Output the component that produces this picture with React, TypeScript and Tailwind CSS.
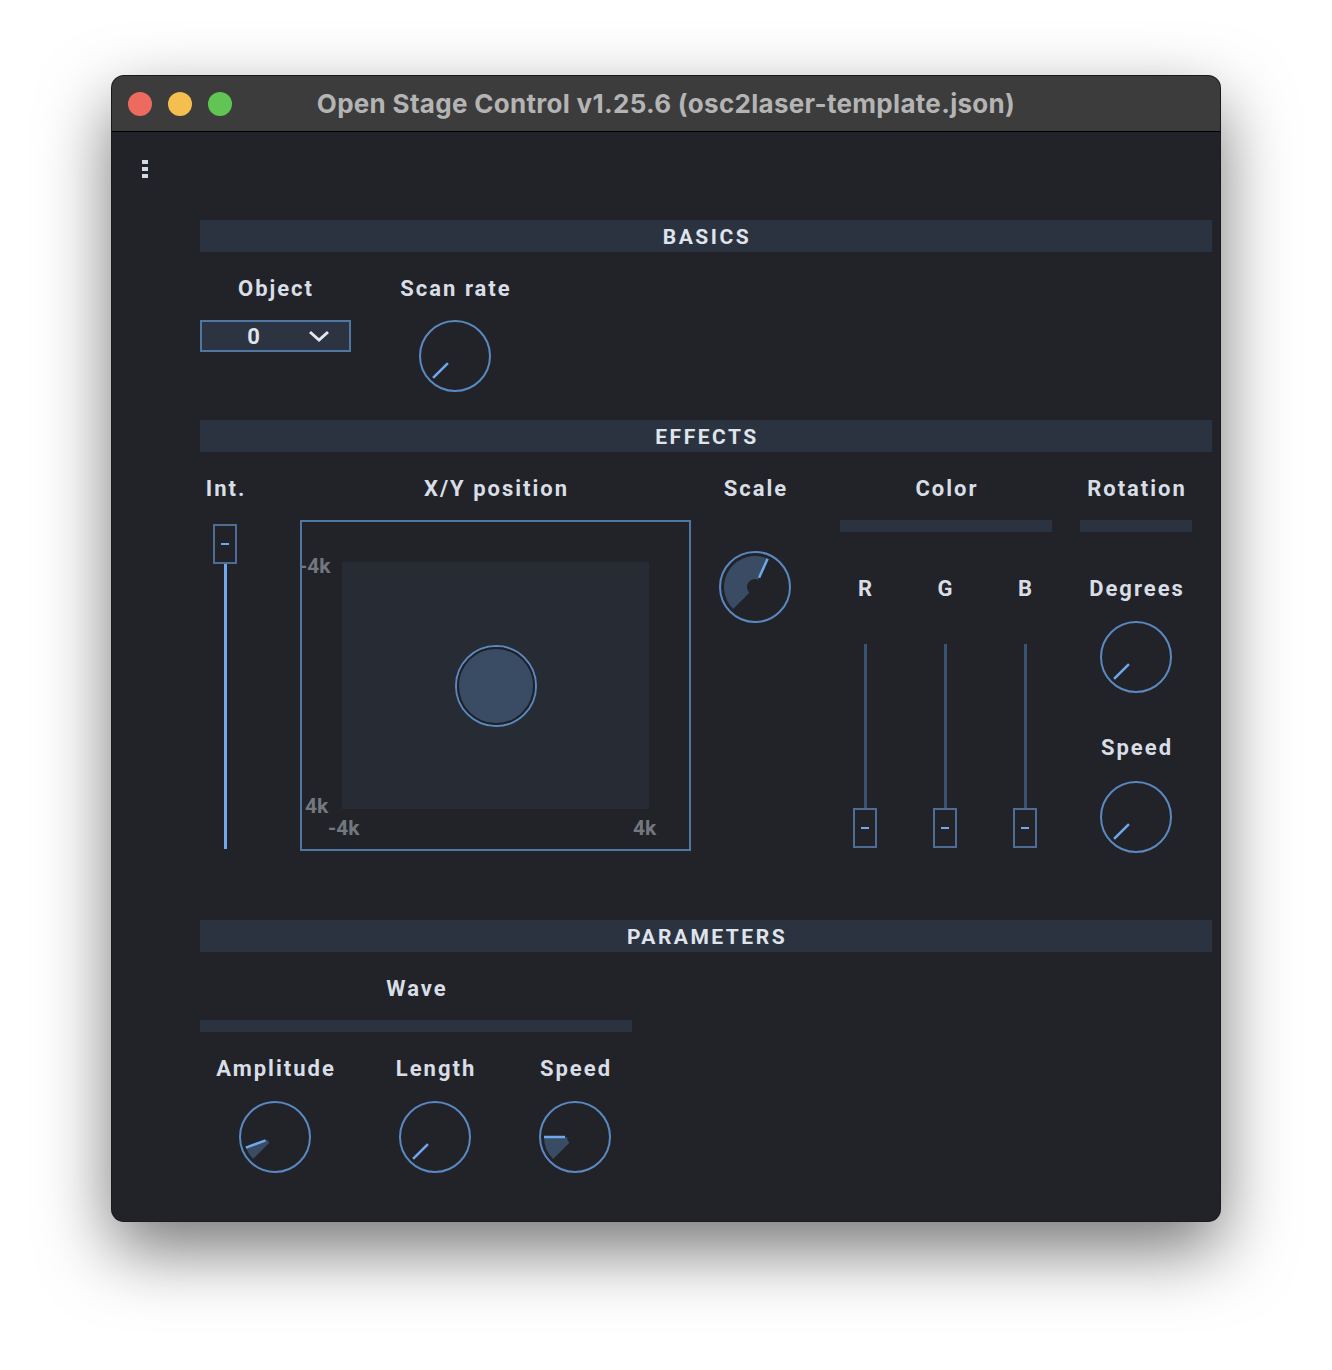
import React from 'react';

const LABEL = "font-['Roboto',sans-serif] font-bold text-[22px] tracking-[2px] text-[#d9dee6] leading-none";
const AXIS = "absolute font-['Roboto',sans-serif] font-bold text-[21px] leading-none text-[#73777e]";

function Knob({ angle, wedge = false }: { angle: number; wedge?: boolean }) {
  const c = 36;
  const pt = (a: number, r: number) => {
    const rad = (a * Math.PI) / 180;
    return `${(c + r * Math.sin(rad)).toFixed(2)} ${(c - r * Math.cos(rad)).toFixed(2)}`;
  };
  const start = -135;
  const large = angle - start > 180 ? 1 : 0;
  const r1 = 8;
  const r2 = 31;
  const d = `M ${pt(start, r1)} L ${pt(start, r2)} A ${r2} ${r2} 0 ${large} 1 ${pt(angle, r2)} L ${pt(angle, r1)} A ${r1} ${r1} 0 ${large} 0 ${pt(start, r1)} Z`;
  const rad = (angle * Math.PI) / 180;
  return (
    <svg width="72" height="72" viewBox="0 0 72 72" className="block">
      {wedge && <path d={d} fill="#3a4c63" />}
      <circle cx={c} cy={c} r="35" fill="none" stroke="#5a89c2" strokeWidth="2" />
      <line
        x1={c + 10 * Math.sin(rad)}
        y1={c - 10 * Math.cos(rad)}
        x2={c + 31 * Math.sin(rad)}
        y2={c - 31 * Math.cos(rad)}
        stroke="#6ea8ee"
        strokeWidth="2.5"
      />
    </svg>
  );
}

function Handle() {
  return (
    <div className="w-[24px] h-[40px] border-2 border-[#4d6d94] flex items-center justify-center">
      <div className="w-[8px] h-[2px] bg-[#6ea8ee]" />
    </div>
  );
}

function SectionHeader({ title }: { title: string }) {
  return (
    <div className="h-[32px] pt-[3px] pl-[2px] bg-[#2c3340] flex items-center justify-center font-['Roboto',sans-serif] font-bold text-[21px] tracking-[2.5px] text-[#dfe4ec]">
      {title}
    </div>
  );
}

function Label({ text, className = '' }: { text: string; className?: string }) {
  return <div className={`h-[68px] pt-[6px] pl-[2px] flex items-center justify-center whitespace-nowrap ${LABEL} ${className}`}>{text}</div>;
}

function RgbFader({ name }: { name: string }) {
  return (
    <div className="w-[50px] flex flex-col items-center">
      <div className={`h-[84px] pt-[30px] pl-[2px] flex items-center ${LABEL}`}>{name}</div>
      <div className="h-[28px]" />
      <div className="w-[3px] h-[164px] bg-[#3a5273]" />
      <Handle />
    </div>
  );
}

export default function App() {
  return (
    <div className="w-[1332px] h-[1370px] bg-white pt-[76px] pl-[112px]">
      <div className="w-[1108px] h-[1145px] rounded-[12px] overflow-hidden bg-[#212329] ring-1 ring-[#1a1a1a] shadow-[0_28px_70px_rgba(0,0,0,0.55)] flex flex-col">
        {/* title bar */}
        <div className="h-[56px] bg-[#3c3c3c] border-b border-black flex items-center shrink-0">
          <div className="w-[132px] flex items-center gap-[16px] pl-[16px]">
            <div className="w-[24px] h-[24px] rounded-full bg-[#ed6a5e]" />
            <div className="w-[24px] h-[24px] rounded-full bg-[#f5bf4f]" />
            <div className="w-[24px] h-[24px] rounded-full bg-[#61c554]" />
          </div>
          <div className="flex-1 text-center font-['Inter',sans-serif] font-bold text-[26px] tracking-[0.3px] text-[#b4b4b4] whitespace-nowrap">
            Open Stage Control v1.25.6 (osc2laser-template.json)
          </div>
          <div className="w-[132px]" />
        </div>

        <div className="flex flex-1">
          {/* side menu */}
          <div className="w-[88px] pl-[30px] pt-[28px]">
            <div className="flex flex-col gap-[3px]">
              <div className="w-[6px] h-[4px] bg-[#d3d9e2]" />
              <div className="w-[6px] h-[4px] bg-[#d3d9e2]" />
              <div className="w-[6px] h-[4px] bg-[#d3d9e2]" />
            </div>
          </div>

          <div className="w-[1012px] pt-[88px]">
            {/* BASICS */}
            <SectionHeader title="BASICS" />
            <div className="h-[168px] flex">
              <div className="w-[150px] flex flex-col items-center">
                <Label text="Object" />
                <div className="w-[151px] h-[32px] border-2 border-[#4f77a3] bg-[#2c3441] flex items-center">
                  <span className="w-[104px] text-center font-['Roboto',sans-serif] font-bold text-[22px] text-[#dfe4ec]">0</span>
                  <svg width="22" height="14" viewBox="0 0 22 14" className="ml-[2px]">
                    <path d="M2 3 L11 11 L20 3" fill="none" stroke="#e4e8ee" strokeWidth="3" />
                  </svg>
                </div>
              </div>
              <div className="w-[150px] ml-[30px] flex flex-col items-center">
                <Label text="Scan rate" />
                <Knob angle={-135} />
              </div>
            </div>

            {/* EFFECTS */}
            <SectionHeader title="EFFECTS" />
            <div className="h-[468px] flex">
              {/* Int. */}
              <div className="w-[50px] flex flex-col items-center">
                <Label text="Int." />
                <div className="mt-[4px] flex flex-col items-center">
                  <Handle />
                  <div className="w-[3px] h-[285px] bg-[#6ea8ee]" />
                </div>
              </div>

              {/* X/Y */}
              <div className="w-[391px] ml-[50px] flex flex-col">
                <Label text="X/Y position" />
                <div className="relative w-[391px] h-[331px] border-2 border-[#4f77a3] p-[40px] overflow-hidden">
                  <div className="w-full h-full bg-[#272b34] flex items-center justify-center">
                    <div className="w-[82px] h-[82px] rounded-full border-2 border-[#5a89c2]">
                      <div className="w-full h-full rounded-full border-2 border-[#1e2228] bg-[#3a4c64]" />
                    </div>
                  </div>
                  <span className={`${AXIS} left-[-3px] top-[34px]`}>-4k</span>
                  <span className={`${AXIS} left-[3px] top-[274px]`}>4k</span>
                  <span className={`${AXIS} left-[26px] top-[296px]`}>-4k</span>
                  <span className={`${AXIS} left-[331px] top-[296px]`}>4k</span>
                </div>
              </div>

              {/* Scale */}
              <div className="w-[110px] ml-[9px] flex flex-col items-center">
                <Label text="Scale" />
                <div className="mt-[31px]">
                  <Knob angle={24} wedge />
                </div>
              </div>

              {/* Color */}
              <div className="w-[212px] ml-[30px] flex flex-col">
                <Label text="Color" />
                <div className="h-[12px] bg-[#2c3340]" />
                <div className="flex gap-[30px]">
                  <RgbFader name="R" />
                  <RgbFader name="G" />
                  <RgbFader name="B" />
                </div>
              </div>

              {/* Rotation */}
              <div className="w-[112px] ml-[28px] flex flex-col">
                <Label text="Rotation" />
                <div className="h-[12px] bg-[#2c3340]" />
                <div className="flex flex-col items-center">
                  <div className={`h-[84px] pt-[30px] pl-[2px] flex items-center whitespace-nowrap ${LABEL}`}>Degrees</div>
                  <div className="mt-[5px]">
                    <Knob angle={-135} />
                  </div>
                  <div className={`h-[88px] pt-[22px] pl-[2px] flex items-center whitespace-nowrap ${LABEL}`}>Speed</div>
                  <div>
                    <Knob angle={-135} />
                  </div>
                </div>
              </div>
            </div>

            {/* PARAMETERS */}
            <SectionHeader title="PARAMETERS" />
            <div className="w-[432px] flex flex-col">
              <Label text="Wave" />
              <div className="h-[12px] bg-[#2c3340]" />
              <div className="flex">
                <div className="w-[110px] shrink-0 ml-[20px] flex flex-col items-center">
                  <Label text="Amplitude" />
                  <div className="mt-[1px]">
                    <Knob angle={-110} wedge />
                  </div>
                </div>
                <div className="w-[110px] shrink-0 ml-[50px] flex flex-col items-center">
                  <Label text="Length" />
                  <div className="mt-[1px]">
                    <Knob angle={-135} />
                  </div>
                </div>
                <div className="w-[110px] shrink-0 ml-[30px] flex flex-col items-center">
                  <Label text="Speed" />
                  <div className="mt-[1px]">
                    <Knob angle={-90} wedge />
                  </div>
                </div>
              </div>
            </div>
          </div>
        </div>
      </div>
    </div>
  );
}
